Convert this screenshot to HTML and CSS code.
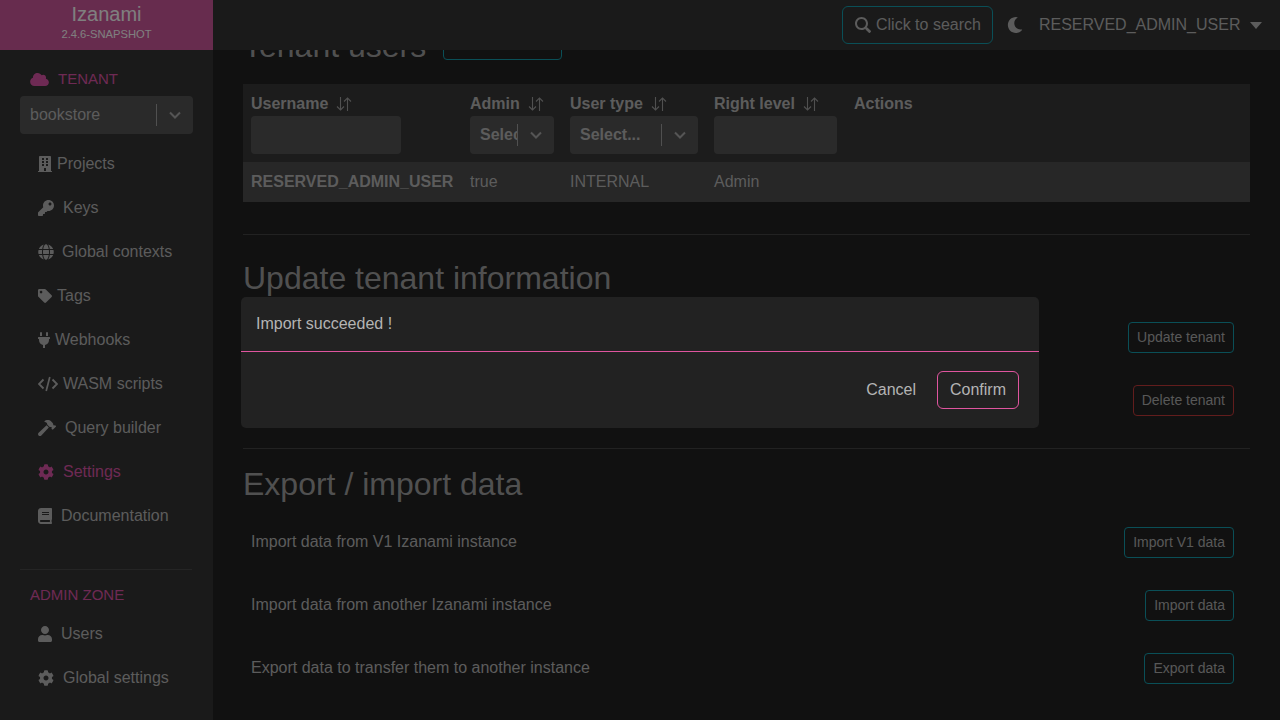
FILE: index.html
```html
<!DOCTYPE html>
<html lang="en">
<head>
  <meta charset="UTF-8">
  <meta name="viewport" content="width=device-width, initial-scale=1.0">
  <title>Izanami - Tenant settings</title>
  <link rel="stylesheet" href="styles.css">
</head>
<body>
  <svg class="defs" width="0" height="0">
    <symbol id="i-gear" viewBox="0 0 512 512"><path d="M487.4 315.7l-42.6-24.6c4.3-23.2 4.3-47 0-70.2l42.6-24.6c4.9-2.8 7.1-8.6 5.5-14-11.1-35.6-30-67.8-54.7-94.6-3.8-4.1-10-5.1-14.8-2.3L380.8 110c-17.9-15.4-38.5-27.3-60.8-35.1V25.8c0-5.6-3.9-10.5-9.4-11.7-36.7-8.2-74.3-7.8-109.2 0-5.5 1.2-9.4 6.1-9.4 11.7V75c-22.2 7.9-42.8 19.8-60.8 35.1L88.7 85.5c-4.9-2.8-11-1.9-14.8 2.3-24.7 26.7-43.6 58.9-54.7 94.6-1.7 5.4.6 11.2 5.5 14L67.3 221c-4.3 23.2-4.3 47 0 70.2l-42.6 24.6c-4.9 2.8-7.1 8.6-5.5 14 11.1 35.6 30 67.8 54.7 94.6 3.8 4.1 10 5.1 14.8 2.3l42.6-24.6c17.9 15.4 38.5 27.3 60.8 35.1v49.2c0 5.6 3.9 10.5 9.4 11.7 36.7 8.2 74.3 7.8 109.2 0 5.5-1.2 9.4-6.1 9.4-11.7v-49.2c22.2-7.9 42.8-19.8 60.8-35.1l42.6 24.6c4.9 2.8 11 1.9 14.8-2.3 24.7-26.7 43.6-58.9 54.7-94.6 1.5-5.5-.7-11.3-5.6-14.1zM256 336c-44.1 0-80-35.9-80-80s35.9-80 80-80 80 35.9 80 80-35.9 80-80 80z"/></symbol>
    <symbol id="i-sort" viewBox="0 0 16 16"><path d="M4.5 1v13M1 10.5L4.5 14 8 10.5M11.5 15V2M8 5.5L11.5 2 15 5.5" fill="none" stroke="currentColor" stroke-width="1.1"/></symbol>
    <symbol id="i-chevron" viewBox="0 0 12 8"><path d="M1 1.5L6 6.5 11 1.5" fill="none" stroke="currentColor" stroke-width="2"/></symbol>
  </svg>

  <div class="app">
    <aside class="sidebar">
      <div class="brand">
        <div class="brand-name">Izanami</div>
        <div class="brand-version">2.4.6-SNAPSHOT</div>
      </div>

      <div class="section-title tenant-title">
        <svg class="icon" width="19" height="15" viewBox="0 0 640 512"><path d="M537.6 226.6c4.1-10.7 6.4-22.4 6.4-34.6 0-53-43-96-96-96-19.7 0-38.1 6-53.3 16.2C367 64.2 315.3 32 256 32c-88.4 0-160 71.6-160 160 0 2.7.1 5.4.2 8.1C40.2 219.8 0 273.2 0 336c0 79.5 64.5 144 144 144h368c70.7 0 128-57.3 128-128 0-61.9-44-113.6-102.4-125.4z"/></svg>
        TENANT
      </div>
      <div class="tenant-select">
        <span class="tenant-value">bookstore</span>
        <span class="select-sep"></span>
        <svg class="select-arrow" width="12" height="8"><use href="#i-chevron"/></svg>
      </div>

      <nav class="nav">
        <a class="nav-item">
          <svg class="icon gap5" width="14" height="16" viewBox="0 0 448 512"><path d="M436 480h-20V24c0-13.255-10.745-24-24-24H56C42.745 0 32 10.745 32 24v456H12c-6.627 0-12 5.373-12 12v20h448v-20c0-6.627-5.373-12-12-12zM128 76c0-6.627 5.373-12 12-12h40c6.627 0 12 5.373 12 12v40c0 6.627-5.373 12-12 12h-40c-6.627 0-12-5.373-12-12V76zm0 96c0-6.627 5.373-12 12-12h40c6.627 0 12 5.373 12 12v40c0 6.627-5.373 12-12 12h-40c-6.627 0-12-5.373-12-12v-40zm52 148h-40c-6.627 0-12-5.373-12-12v-40c0-6.627 5.373-12 12-12h40c6.627 0 12 5.373 12 12v40c0 6.627-5.373 12-12 12zm76 160h-64v-84c0-6.627 5.373-12 12-12h40c6.627 0 12 5.373 12 12v84zm64-172c0 6.627-5.373 12-12 12h-40c-6.627 0-12-5.373-12-12v-40c0-6.627 5.373-12 12-12h40c6.627 0 12 5.373 12 12v40zm0-96c0 6.627-5.373 12-12 12h-40c-6.627 0-12-5.373-12-12v-40c0-6.627 5.373-12 12-12h40c6.627 0 12 5.373 12 12v40zm0-96c0 6.627-5.373 12-12 12h-40c-6.627 0-12-5.373-12-12V76c0-6.627 5.373-12 12-12h40c6.627 0 12 5.373 12 12v40z"/></svg>
          Projects
        </a>
        <a class="nav-item">
          <svg class="icon gap9" width="16" height="16" viewBox="0 0 512 512"><path d="M512 176.001C512 273.203 433.202 352 336 352c-11.22 0-22.19-1.062-32.827-3.069l-24.012 27.014A23.999 23.999 0 0 1 261.223 384H224v40c0 13.255-10.745 24-24 24h-40v40c0 13.255-10.745 24-24 24H24c-13.255 0-24-10.745-24-24v-78.059c0-6.365 2.529-12.47 7.029-16.971l161.802-161.802C163.108 213.814 160 195.271 160 176 160 78.798 238.797.001 335.999 0 433.488-.001 512 78.511 512 176.001zM336 128c0 26.51 21.49 48 48 48s48-21.49 48-48-21.49-48-48-48-48 21.49-48 48z"/></svg>
          Keys
        </a>
        <a class="nav-item">
          <svg class="icon gap8" width="16" height="16" viewBox="0 0 496 512"><path d="M336.5 160C322 70.7 287.8 8 248 8s-74 62.7-88.5 152h177zM152 256c0 22.2 1.2 43.5 3.3 64h185.3c2.1-20.5 3.3-41.8 3.3-64s-1.2-43.5-3.3-64H155.3c-2.1 20.5-3.3 41.8-3.3 64zm324.7-96c-28.6-67.9-86.5-120.4-158-141.6 24.4 33.8 41.2 84.7 50 141.6h108zM177.2 18.4C105.8 39.6 47.8 92.1 19.3 160h108c8.7-56.9 25.5-107.8 49.9-141.6zM487.4 192H372.7c2.1 21 3.3 42.5 3.3 64s-1.2 43-3.3 64h114.6c5.5-20.5 8.6-41.8 8.6-64s-3.1-43.5-8.5-64zM120 256c0-21.5 1.2-43 3.3-64H8.6C3.2 212.5 0 233.8 0 256s3.2 43.5 8.6 64h114.6c-2-21-3.2-42.5-3.2-64zm39.5 96c14.5 89.3 48.7 152 88.5 152s74-62.7 88.5-152h-177zm159.3 141.6c71.4-21.2 129.4-73.7 158-141.6h-108c-8.8 56.9-25.6 107.8-50 141.6zM19.3 352c28.6 67.9 86.5 120.4 158 141.6-24.4-33.8-41.2-84.7-50-141.6h-108z"/></svg>
          Global contexts
        </a>
        <a class="nav-item">
          <svg class="icon gap5" width="14" height="14" viewBox="0 0 512 512"><path d="M0 252.118V48C0 21.49 21.49 0 48 0h204.118a48 48 0 0 1 33.941 14.059l211.882 211.882c18.745 18.745 18.745 49.137 0 67.882L293.823 497.941c-18.745 18.745-49.137 18.745-67.882 0L14.059 286.059A48 48 0 0 1 0 252.118zM112 64c-26.51 0-48 21.49-48 48s21.49 48 48 48 48-21.49 48-48-21.49-48-48-48z"/></svg>
          Tags
        </a>
        <a class="nav-item">
          <svg class="icon gap5" width="12" height="16" viewBox="0 0 384 512"><path d="M320,32a32,32,0,0,0-64,0v96h64Zm48,128H16A16,16,0,0,0,0,176v32a16,16,0,0,0,16,16H32v32A160.07,160.07,0,0,0,160,412.8V512h64V412.8A160.07,160.07,0,0,0,352,256V224h16a16,16,0,0,0,16-16V176A16,16,0,0,0,368,160ZM128,32a32,32,0,0,0-64,0v96h64Z"/></svg>
          Webhooks
        </a>
        <a class="nav-item">
          <svg class="icon gap5" width="20" height="16" viewBox="0 0 20 16"><path d="M5.5 3.5L1 8l4.500 4.500M14.500 3.500L19 8l-4.500 4.500" fill="none" stroke="currentColor" stroke-width="1.900"/><path d="M11.800 1L8.200 15" fill="none" stroke="currentColor" stroke-width="1.700"/></svg>
          WASM scripts
        </a>
        <a class="nav-item">
          <svg class="icon gap9" width="18" height="16" viewBox="0 0 576 512"><path d="M571.31 193.94l-22.63-22.63c-6.25-6.25-16.38-6.25-22.63 0l-11.31 11.31-28.9-28.9c5.63-21.31.36-44.9-16.35-61.61l-45.25-45.25c-62.48-62.48-163.79-62.48-226.28 0l90.51 45.25v18.75c0 16.97 6.74 33.25 18.75 45.25l49.14 49.14c16.71 16.71 40.3 21.98 61.61 16.35l28.9 28.9-11.31 11.31c-6.25 6.25-6.25 16.38 0 22.63l22.63 22.63c6.25 6.25 16.38 6.25 22.63 0l90.51-90.51c6.23-6.24 6.23-16.37-.02-22.62zm-286.72-15.2c-3.7-3.7-6.84-7.79-9.85-11.95L19.64 404.96c-25.57 23.88-26.26 64.19-1.53 88.93s65.05 24.05 88.93-1.53l238.13-255.07c-3.96-2.91-7.9-5.87-11.44-9.41l-49.14-49.14z"/></svg>
          Query builder
        </a>
        <a class="nav-item active">
          <svg class="icon gap9" width="16" height="16"><use href="#i-gear"/></svg>
          Settings
        </a>
        <a class="nav-item">
          <svg class="icon gap9" width="14" height="16" viewBox="0 0 448 512"><path d="M448 360V24c0-13.3-10.7-24-24-24H96C43 0 0 43 0 96v320c0 53 43 96 96 96h328c13.3 0 24-10.7 24-24v-16c0-7.500-3.500-14.300-8.900-18.700-4.200-15.400-4.200-59.300 0-74.700 5.400-4.300 8.900-11.100 8.900-18.600zM128 134c0-3.300 2.700-6 6-6h212c3.300 0 6 2.700 6 6v20c0 3.300-2.700 6-6 6H134c-3.300 0-6-2.700-6-6v-20zm0 64c0-3.300 2.700-6 6-6h212c3.300 0 6 2.700 6 6v20c0 3.300-2.700 6-6 6H134c-3.300 0-6-2.700-6-6v-20zm253.400 250H96c-17.700 0-32-14.300-32-32 0-17.600 14.400-32 32-32h285.400c-1.900 17.100-1.900 46.900 0 64z"/></svg>
          Documentation
        </a>
      </nav>

      <div class="sidebar-sep"></div>
      <div class="section-title admin-title">ADMIN ZONE</div>
      <nav class="nav admin-nav">
        <a class="nav-item">
          <svg class="icon gap9" width="14" height="16" viewBox="0 0 448 512"><path d="M224 256c70.700 0 128-57.300 128-128S294.700 0 224 0 96 57.300 96 128s57.300 128 128 128zm89.600 32h-16.700c-22.200 10.200-46.900 16-72.900 16s-50.600-5.800-72.900-16h-16.700C60.200 288 0 348.200 0 422.400V464c0 26.500 21.500 48 48 48h352c26.500 0 48-21.500 48-48v-41.600c0-74.200-60.200-134.400-134.400-134.400z"/></svg>
          Users
        </a>
        <a class="nav-item">
          <svg class="icon gap9" width="16" height="16"><use href="#i-gear"/></svg>
          Global settings
        </a>
      </nav>
    </aside>

    <div class="page">
      <header class="topbar">
        <button class="search-btn">
          <svg class="icon" width="16" height="16" viewBox="0 0 512 512"><path d="M505 442.700L405.300 343c-4.500-4.500-10.600-7-17-7H372c27.600-35.300 44-79.700 44-128C416 93.100 322.900 0 208 0S0 93.100 0 208s93.100 208 208 208c48.300 0 92.700-16.400 128-44v16.300c0 6.400 2.500 12.500 7 17l99.700 99.700c9.400 9.400 24.600 9.400 33.900 0l28.300-28.300c9.400-9.400 9.400-24.600.1-34zM208 352c-79.500 0-144-64.400-144-144 0-79.500 64.400-144 144-144 79.500 0 144 64.400 144 144 0 79.500-64.400 144-144 144z"/></svg>
          Click to search
        </button>
        <svg class="icon moon" width="16" height="16" viewBox="0 0 512 512"><path d="M283.211 512c78.962 0 151.079-35.925 198.857-94.792 7.068-8.708-.639-21.430-11.562-19.350-124.203 23.654-238.262-71.576-238.262-196.954 0-72.222 38.662-138.635 101.498-174.394 9.686-5.512 7.250-20.197-3.756-22.230A258.156 258.156 0 0 0 283.211 0c-141.309 0-256 114.511-256 256 0 141.309 114.511 256 256 256z"/></svg>
        <span class="user-name">RESERVED_ADMIN_USER</span>
        <span class="user-caret"></span>
      </header>

      <main class="content">
        <div class="scrolled">
          <div class="title-row">
            <h1 class="title">Tenant users</h1>
            <button class="btn btn-invite"></button>
          </div>

          <table class="users">
            <thead>
              <tr>
                <th class="col-user">
                  <div class="th-label">Username <svg class="sort" width="16" height="16"><use href="#i-sort"/></svg></div>
                  <div class="filter filter-user"></div>
                </th>
                <th class="col-admin">
                  <div class="th-label">Admin <svg class="sort" width="16" height="16"><use href="#i-sort"/></svg></div>
                  <div class="filter filter-admin">
                    <span class="filter-text">Select...</span>
                    <span class="select-sep"></span>
                    <svg class="select-arrow" width="12" height="8"><use href="#i-chevron"/></svg>
                  </div>
                </th>
                <th class="col-type">
                  <div class="th-label">User type <svg class="sort" width="16" height="16"><use href="#i-sort"/></svg></div>
                  <div class="filter filter-type">
                    <span class="filter-text">Select...</span>
                    <span class="select-sep"></span>
                    <svg class="select-arrow" width="12" height="8"><use href="#i-chevron"/></svg>
                  </div>
                </th>
                <th class="col-right">
                  <div class="th-label">Right level <svg class="sort" width="16" height="16"><use href="#i-sort"/></svg></div>
                  <div class="filter filter-right"></div>
                </th>
                <th class="col-actions">
                  <div class="th-label">Actions</div>
                  <div class="filter-spacer"></div>
                </th>
              </tr>
            </thead>
            <tbody>
              <tr>
                <td class="cell-name">RESERVED_ADMIN_USER</td>
                <td>true</td>
                <td>INTERNAL</td>
                <td>Admin</td>
                <td></td>
              </tr>
            </tbody>
          </table>

          <hr class="sep sep-first">
          <h2 class="title update-title">Update tenant information</h2>
          <div class="setting-row"><button class="btn btn-teal">Update tenant</button></div>
          <div class="setting-row"><button class="btn btn-red">Delete tenant</button></div>

          <hr class="sep sep-second">
          <h2 class="title export-title">Export / import data</h2>
          <div class="setting-row"><span>Import data from V1 Izanami instance</span><button class="btn btn-teal">Import V1 data</button></div>
          <div class="setting-row"><span>Import data from another Izanami instance</span><button class="btn btn-teal">Import data</button></div>
          <div class="setting-row"><span>Export data to transfer them to another instance</span><button class="btn btn-teal">Export data</button></div>
        </div>
      </main>
    </div>
  </div>

  <div class="overlay">
    <div class="modal">
      <div class="modal-body">Import succeeded !</div>
      <div class="modal-footer">
        <button class="modal-cancel">Cancel</button>
        <button class="modal-confirm">Confirm</button>
      </div>
    </div>
  </div>
</body>
</html>
```

FILE: styles.css
```css
* {
  box-sizing: border-box;
}

html, body {
  height: 100%;
}

body {
  margin: 0;
  overflow: hidden;
  background-color: #222;
  color: #b8b8b8;
  font-family: "Liberation Sans", Arial, sans-serif;
  font-size: 16px;
}

button {
  font-family: inherit;
}

.defs {
  position: absolute;
}

.icon {
  fill: currentColor;
  flex-shrink: 0;
}

.gap5 { margin-right: 5px; }
.gap8 { margin-right: 8px; }
.gap9 { margin-right: 9px; }

.app {
  display: flex;
  height: 720px;
}

/* sidebar */
.sidebar {
  width: 213px;
  flex-shrink: 0;
  background-color: #343434;
}

.brand {
  height: 50px;
  padding-top: 3px;
  background-color: #ce589c;
  color: #fff;
  text-align: center;
}

.brand-name {
  font-size: 20px;
  line-height: 22px;
}

.brand-version {
  margin-top: 2px;
  font-size: 11.2px;
  line-height: 14px;
}

.section-title {
  display: flex;
  align-items: center;
  gap: 9px;
  padding-left: 30px;
  color: #dc55a8;
  font-size: 15px;
  line-height: 18px;
}

.tenant-title {
  margin-top: 20px;
}

.tenant-select {
  display: flex;
  align-items: center;
  height: 38px;
  margin: 8px 20px 0;
  padding: 0 12px 0 10px;
  border-radius: 4px;
  background-color: #555;
}

.tenant-value {
  flex: 1;
}

.select-sep {
  width: 1px;
  height: 22px;
  background-color: #a0a0a0;
}

.select-arrow {
  margin-left: 12px;
  color: #aaa;
}

.nav {
  display: flex;
  flex-direction: column;
  margin-top: 8px;
}

.nav-item {
  display: flex;
  align-items: center;
  height: 44px;
  padding-left: 38px;
}

.nav-item.active {
  color: #dc55a8;
}

.sidebar-sep {
  height: 1px;
  margin: 31px 21px 0 20px;
  background-color: #4a4a4a;
}

.admin-title {
  margin-top: 16px;
}

.admin-nav {
  margin-top: 8px;
}

/* top bar */
.page {
  display: flex;
  flex: 1;
  flex-direction: column;
  min-width: 0;
}

.topbar {
  display: flex;
  align-items: center;
  flex-shrink: 0;
  height: 50px;
  padding-left: 629px;
  background-color: #343434;
}

.search-btn {
  display: flex;
  align-items: center;
  gap: 5px;
  height: 38px;
  padding: 0 11px 0 12px;
  border: 1px solid #149eae;
  border-radius: 6px;
  background: none;
  color: #b8b8b8;
  font-size: 16px;
}

.moon {
  margin-left: 14px;
}

.user-name {
  margin-left: 16px;
}

.user-caret {
  margin-left: 10px;
  border-top: 7px solid #b8b8b8;
  border-left: 6px solid transparent;
  border-right: 6px solid transparent;
}

/* content */
.content {
  flex: 1;
  overflow: hidden;
}

.scrolled {
  margin-top: -23px;
  padding: 0 30px;
}

.title-row {
  display: flex;
  align-items: center;
  gap: 17px;
}

.title {
  margin: 0;
  color: #a0a0a0;
  font-size: 32px;
  font-weight: 400;
  line-height: 38px;
}

.btn {
  height: 31px;
  padding: 0 8px 2px;
  border: 1px solid #149eae;
  border-radius: 4px;
  background: none;
  color: #b0b0b0;
  font-size: 14px;
}

.btn-invite {
  width: 119px;
  margin-top: -3px;
}

.btn-red {
  border-color: #c43a3a;
}

/* table */
.users {
  width: 1007px;
  margin-top: 19px;
  border-collapse: collapse;
  table-layout: fixed;
}

.users th {
  height: 78px;
  padding: 11px 8px 0;
  background-color: #383838;
  font-weight: 700;
  text-align: left;
  vertical-align: top;
}

.col-user { width: 219px; }
.col-admin { width: 100px; }
.col-type { width: 144px; }
.col-right { width: 140px; }

.th-label {
  display: flex;
  align-items: center;
  gap: 7px;
  height: 18px;
  line-height: 18px;
  white-space: nowrap;
}

.sort {
  margin-left: 1px;
  color: #a0a0a0;
}

.filter {
  display: flex;
  align-items: center;
  height: 38px;
  margin-top: 3px;
  border-radius: 4px;
  background-color: #555;
}

.filter-user { width: 150px; }
.filter-right { width: 123px; }
.filter-admin { width: 84px; padding-left: 10px; }
.filter-type { width: 128px; padding-left: 10px; }

.filter-text {
  overflow: hidden;
  white-space: nowrap;
}

.filter-admin .filter-text { width: 37px; }
.filter-type .filter-text { width: 81px; }

.filter-spacer {
  height: 38px;
}

.users td {
  height: 40px;
  padding: 0 8px;
  background-color: #4e4e4e;
  white-space: nowrap;
}

.users .cell-name {
  font-weight: 700;
}

.sep {
  height: 1px;
  margin: 0;
  border: none;
  background-color: #444;
  width: 1007px;
}

.sep-first {
  margin-top: 32px;
}

.update-title {
  margin-top: 24px;
}

.export-title {
  margin-top: 16px;
  margin-bottom: -1px;
}

.sep-second {
  margin-top: 32px;
}

.setting-row {
  display: flex;
  align-items: center;
  justify-content: flex-end;
  width: 1007px;
  height: 31px;
  margin-top: 32px;
  padding: 0 16px 0 8px;
}

.update-title + .setting-row {
  margin-top: 25px;
}

.export-title + .setting-row {
  margin-top: 25px;
}

.setting-row span {
  margin-right: auto;
  margin-bottom: 2px;
}

/* confirm dialog */
.overlay {
  position: fixed;
  top: 0;
  right: 0;
  bottom: 0;
  left: 0;
  display: flex;
  justify-content: center;
  align-items: flex-start;
  padding-top: 297px;
  background-color: rgba(0, 0, 0, 0.5);
}

.modal {
  width: 798px;
  height: 131px;
  border-radius: 5px;
  background-color: #222;
  color: #b4b4b4;
}

.modal-body {
  height: 55px;
  padding: 18px 15px 0;
  border-bottom: 1px solid #e0559f;
  line-height: 18px;
}

.modal-footer {
  display: flex;
  justify-content: flex-end;
  align-items: center;
  gap: 21px;
  height: 76px;
  padding-right: 20px;
}

.modal-cancel, .modal-confirm {
  background: none;
  color: #b4b4b4;
  font-size: 16px;
}

.modal-cancel {
  padding: 0;
  border: none;
}

.modal-confirm {
  width: 82px;
  height: 38px;
  padding: 0;
  border: 1px solid #e0559f;
  border-radius: 6px;
}
```
